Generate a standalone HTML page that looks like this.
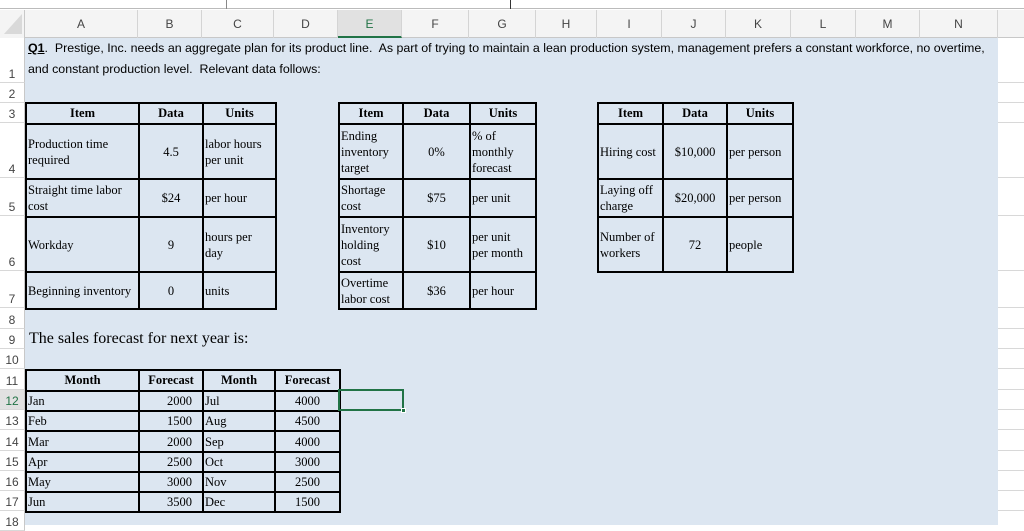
<!DOCTYPE html>
<html><head><meta charset="utf-8"><style>
*{margin:0;padding:0;box-sizing:border-box}
body{width:1024px;height:525px;overflow:hidden;background:#fff;position:relative;font-family:"Liberation Sans",sans-serif}
.a{position:absolute}
.fill{position:absolute;left:25px;top:38px;width:973px;height:487px;background:#dce6f1}
.hdr{position:absolute;top:10px;height:28px;background:#f4f4f4;border-bottom:1px solid #c8c8c8;left:0;width:1024px}
.ch{position:absolute;top:10px;height:28px;line-height:28px;text-align:center;font-size:12px;color:#444;border-right:1px solid #d4d4d4}
.rh{position:absolute;left:0;width:25px;font-size:12px;color:#444;text-align:center;border-bottom:1px solid #d8d8d8;border-right:1px solid #c8c8c8;background:#fff;display:flex;align-items:flex-end;justify-content:center;padding-bottom:1px}
.grid{position:absolute;left:998px;width:26px;border-bottom:1px solid #d8d8d8}
table{position:absolute;border-collapse:collapse;font-family:"Liberation Serif",serif;font-size:12.5px;color:#000;table-layout:fixed}
td{border:2px solid #000;padding:0 1px;line-height:16px;vertical-align:middle;overflow:hidden}
th{border:2px solid #000;font-weight:bold;text-align:center;font-size:12.5px}
.c{text-align:center}
.r{text-align:right;padding-right:10px}
</style></head><body>
<div class="a" style="left:0;top:0;width:1024px;height:9px;border-bottom:1px solid #bbb;background:#fff"></div>
<div class="a" style="left:226px;top:0;width:1px;height:9px;background:#888"></div>
<div class="a" style="left:510px;top:0;width:1px;height:9px;background:#333"></div>
<div class="hdr"></div>
<div class="a" style="left:0;top:10px;width:25px;height:28px;background:#f4f4f4;border-right:1px solid #c8c8c8"></div>
<div class="a" style="left:4px;top:14px;width:0;height:0;border-left:18px solid transparent;border-bottom:20px solid #d9d9d9"></div>
<div class="ch" style="left:25px;width:113px">A</div>
<div class="ch" style="left:138px;width:64px">B</div>
<div class="ch" style="left:202px;width:72px">C</div>
<div class="ch" style="left:274px;width:64px">D</div>
<div class="ch" style="left:338px;width:64px;background:#e1e1e1;color:#217346;border-bottom:2px solid #217346">E</div>
<div class="ch" style="left:402px;width:67px">F</div>
<div class="ch" style="left:469px;width:67px">G</div>
<div class="ch" style="left:536px;width:61px">H</div>
<div class="ch" style="left:597px;width:65px">I</div>
<div class="ch" style="left:662px;width:64px">J</div>
<div class="ch" style="left:726px;width:65px">K</div>
<div class="ch" style="left:791px;width:65px">L</div>
<div class="ch" style="left:856px;width:64px">M</div>
<div class="ch" style="left:920px;width:78px">N</div>
<div class="fill"></div>

<div class="rh" style="top:38px;height:45px">1</div>
<div class="rh" style="top:83px;height:20px">2</div>
<div class="rh" style="top:103px;height:20px">3</div>
<div class="rh" style="top:123px;height:55px">4</div>
<div class="rh" style="top:178px;height:38px">5</div>
<div class="rh" style="top:216px;height:55px">6</div>
<div class="rh" style="top:271px;height:37px">7</div>
<div class="rh" style="top:308px;height:21px">8</div>
<div class="rh" style="top:329px;height:20px">9</div>
<div class="rh" style="top:349px;height:20px">10</div>
<div class="rh" style="top:369px;height:21px">11</div>
<div class="rh" style="top:390px;height:20px;color:#217346;background:#e1e1e1">12</div>
<div class="rh" style="top:410px;height:20px">13</div>
<div class="rh" style="top:430px;height:21px">14</div>
<div class="rh" style="top:451px;height:20px">15</div>
<div class="rh" style="top:471px;height:20px">16</div>
<div class="rh" style="top:491px;height:20px">17</div>
<div class="rh" style="top:511px;height:20px">18</div>
<div class="grid" style="top:38px;height:45px"></div>
<div class="grid" style="top:83px;height:20px"></div>
<div class="grid" style="top:103px;height:20px"></div>
<div class="grid" style="top:123px;height:55px"></div>
<div class="grid" style="top:178px;height:38px"></div>
<div class="grid" style="top:216px;height:55px"></div>
<div class="grid" style="top:271px;height:37px"></div>
<div class="grid" style="top:308px;height:21px"></div>
<div class="grid" style="top:329px;height:20px"></div>
<div class="grid" style="top:349px;height:20px"></div>
<div class="grid" style="top:369px;height:21px"></div>
<div class="grid" style="top:390px;height:20px"></div>
<div class="grid" style="top:410px;height:20px"></div>
<div class="grid" style="top:430px;height:21px"></div>
<div class="grid" style="top:451px;height:20px"></div>
<div class="grid" style="top:471px;height:20px"></div>
<div class="grid" style="top:491px;height:20px"></div>

<div class="a" style="left:28px;top:38px;font-size:12.4px;line-height:21px;color:#000;width:975px;white-space:nowrap"><b style="text-decoration:underline">Q1</b>.&nbsp; Prestige, Inc. needs an aggregate plan for its product line.&nbsp; As part of trying to maintain a lean production system, management prefers a constant workforce, no overtime,<br>and constant production level.&nbsp; Relevant data follows:</div>

<table style="left:25px;top:102px;width:250px">
<colgroup><col style="width:113px"><col style="width:64px"><col style="width:73px"></colgroup>
<tr style="height:21px"><th>Item</th><th>Data</th><th>Units</th></tr>
<tr style="height:55px"><td>Production time required</td><td class="c">4.5</td><td>labor hours per unit</td></tr>
<tr style="height:38px"><td>Straight time labor cost</td><td class="c">$24</td><td>per hour</td></tr>
<tr style="height:55px"><td>Workday</td><td class="c">9</td><td>hours per<br>day</td></tr>
<tr style="height:37px"><td>Beginning inventory</td><td class="c">0</td><td>units</td></tr>
</table>

<table style="left:338px;top:102px;width:197px">
<colgroup><col style="width:64px"><col style="width:67px"><col style="width:66px"></colgroup>
<tr style="height:21px"><th>Item</th><th>Data</th><th>Units</th></tr>
<tr style="height:55px"><td>Ending inventory target</td><td class="c">0%</td><td>% of monthly forecast</td></tr>
<tr style="height:38px"><td>Shortage cost</td><td class="c">$75</td><td>per unit</td></tr>
<tr style="height:55px"><td>Inventory holding cost</td><td class="c">$10</td><td>per unit<br>per month</td></tr>
<tr style="height:37px"><td>Overtime labor cost</td><td class="c">$36</td><td>per hour</td></tr>
</table>

<table style="left:597px;top:102px;width:195px">
<colgroup><col style="width:65px"><col style="width:64px"><col style="width:66px"></colgroup>
<tr style="height:21px"><th>Item</th><th>Data</th><th>Units</th></tr>
<tr style="height:55px"><td style="white-space:nowrap">Hiring cost</td><td class="c">$10,000</td><td style="white-space:nowrap">per person</td></tr>
<tr style="height:38px"><td>Laying off charge</td><td class="c">$20,000</td><td style="white-space:nowrap">per person</td></tr>
<tr style="height:55px"><td>Number of workers</td><td class="c">72</td><td>people</td></tr>
</table>

<div class="a" style="left:29px;top:329px;font-family:'Liberation Serif',serif;font-size:16px;line-height:20px;color:#000">The sales forecast for next year is:</div>

<table style="left:25px;top:369px;width:314px">
<colgroup><col style="width:113px"><col style="width:64px"><col style="width:72px"><col style="width:65px"></colgroup>
<tr style="height:21px"><th>Month</th><th>Forecast</th><th>Month</th><th>Forecast</th></tr>
<tr style="height:20px"><td>Jan</td><td class="r">2000</td><td>Jul</td><td class="c">4000</td></tr>
<tr style="height:20px"><td>Feb</td><td class="r">1500</td><td>Aug</td><td class="c">4500</td></tr>
<tr style="height:21px"><td>Mar</td><td class="r">2000</td><td>Sep</td><td class="c">4000</td></tr>
<tr style="height:20px"><td>Apr</td><td class="r">2500</td><td>Oct</td><td class="c">3000</td></tr>
<tr style="height:20px"><td>May</td><td class="r">3000</td><td>Nov</td><td class="c">2500</td></tr>
<tr style="height:20px"><td>Jun</td><td class="r">3500</td><td>Dec</td><td class="c">1500</td></tr>
</table>

<div class="a" style="left:338px;top:389px;width:66px;height:22px;border:2px solid #217346"></div>
<div class="a" style="left:401px;top:408px;width:5px;height:5px;background:#217346;border:1px solid #fff"></div>
</body></html>
